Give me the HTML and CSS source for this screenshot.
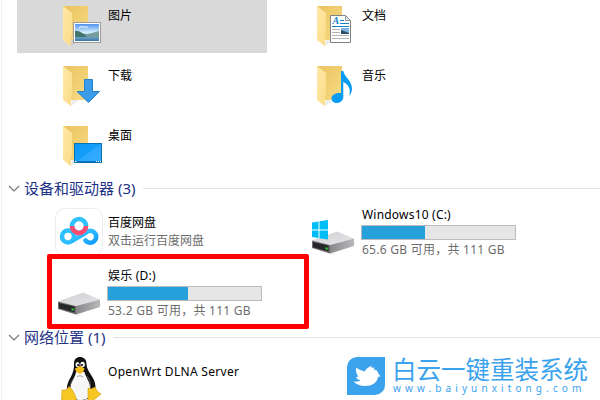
FILE: index.html
```html
<!DOCTYPE html>
<html lang="zh-CN">
<head>
<meta charset="utf-8">
<title>此电脑</title>
<link rel="stylesheet" href="styles.css">
</head>
<body>
<svg class="defs" width="0" height="0">
  <defs>
    <linearGradient id="back" x1="0" y1="0" x2="1" y2="1"><stop offset="0" stop-color="#e9c25e"/><stop offset="1" stop-color="#f8dc85"/></linearGradient>
    <linearGradient id="flap" x1="0" y1="0" x2="1" y2="1"><stop offset="0" stop-color="#ffe9a9"/><stop offset="1" stop-color="#fadc86"/></linearGradient>
    <linearGradient id="blue" x1="0" y1="0" x2="1" y2="1"><stop offset="0" stop-color="#0c98f7"/><stop offset=".5" stop-color="#159dfb"/><stop offset=".52" stop-color="#2ba8ff"/><stop offset="1" stop-color="#35acff"/></linearGradient>
    <linearGradient id="sky" x1="0" y1="0" x2="0" y2="1"><stop offset="0" stop-color="#5193ee"/><stop offset=".5" stop-color="#d8effb"/><stop offset=".65" stop-color="#8cb8d0"/><stop offset="1" stop-color="#3777a8"/></linearGradient>
    <linearGradient id="top" x1="0" y1="0" x2="1" y2="1"><stop offset="0" stop-color="#cfcfd2"/><stop offset="1" stop-color="#e6e6e9"/></linearGradient>
    <linearGradient id="side" x1="0" y1="0" x2="1" y2="0"><stop offset="0" stop-color="#88888b"/><stop offset="1" stop-color="#b9b9bc"/></linearGradient>
    <linearGradient id="pan" x1="0" y1="0" x2="1" y2="1"><stop offset="0" stop-color="#3bd2ff"/><stop offset="1" stop-color="#149bff"/></linearGradient>
    <symbol id="folder" viewBox="0 0 48 48">
      <path d="M10 40l7 .5-8 5.500z" fill="#000" opacity=".08"/>
      <path d="M1 6h25v34H9L1 38z" fill="url(#back)"/>
      <path d="M1 6l9 7v22l-1 .8V46.200L1 40z" fill="url(#flap)"/>
    </symbol>
    <symbol id="drive" viewBox="0 0 48 26">
      <path d="M4 18l20 6 22-10v-2L24 25z" fill="#000" opacity=".08"/>
      <path d="M3 10.500L28 1.500l17 7L21 15z" fill="url(#top)"/>
      <path d="M21 15l24-6.500v7.500L21 23.500z" fill="url(#side)"/>
      <path d="M3 10.500L21 15v8.500L3 18z" fill="#6d6d70"/>
      <path d="M4 12l15.500 3.500v6L4 17.200z" fill="#262729"/>
      <path d="M16.500 17.200l2.200.6v2l-2.200-.6z" fill="#35dc38"/>
    </symbol>
  </defs>
</svg>
<main class="explorer">
  <section class="grid folders">
    <div class="item selected">
      <svg class="icon" viewBox="0 0 48 48"><use href="#folder"/>
        <rect x="11.500" y="22.500" width="27" height="20" fill="#fff" stroke="#9c9c9c"/>
        <rect x="13" y="24" width="24" height="17" fill="url(#sky)"/>
        <path d="M13 31c4-1 7 3 12 4l12 2H13z" fill="#45746c"/><path d="M23 35l7-2 7-2v6H25z" fill="#769c9b"/>
        <path d="M17 28c3-3 6 0 9-1" stroke="#fff" stroke-width="1.200" fill="none" opacity=".7"/>
      </svg>
      <p class="name">图片</p>
    </div>
    <div class="item">
      <svg class="icon" viewBox="0 0 48 48"><use href="#folder"/>
        <path d="M14.500 15.500h15l5 5v22h-20z" fill="#fff" stroke="#7f8489"/>
        <path d="M29.500 15.500v5h5z" fill="#e6e6e6" stroke="#7f8489" stroke-width=".8"/>
        <text class="doc-letter" x="16.500" y="24">A</text>
        <path d="M24 20.500h4M24 23.500h9M16 26.500h17" stroke="#1c82c8"/>
        <path d="M16 29.500h8M16 32.500h8M16 35.500h17M16 38.500h17" stroke="#b1b5b8"/>
        <rect x="25" y="28" width="8" height="6" fill="#7eb2e2"/><path d="M25 30l8 3v1h-8z" fill="#2a4d61"/>
      </svg>
      <p class="name">文档</p>
    </div>
    <div class="item">
      <svg class="icon" viewBox="0 0 48 48"><use href="#folder"/>
        <path d="M22.500 19.500h8v12h7L26.500 42.500 15 31.500h7.500z" fill="#3b9dea" stroke="#2382cb"/>
      </svg>
      <p class="name">下载</p>
    </div>
    <div class="item">
      <svg class="icon" viewBox="0 0 48 48"><use href="#folder"/>
        <path d="M25 11h2.300c1 6 9 10 8.700 18-.1 3-1.500 5.500-2.700 7 1.300-6 .5-10.500-6-14v14.500c0 4-3 6.500-6.700 6.500-3 0-5.100-1.700-5.100-4.500 0-4 5.500-6.500 9.500-5.200z" fill="#099cf5"/>
      </svg>
      <p class="name">音乐</p>
    </div>
    <div class="item">
      <svg class="icon" viewBox="0 0 48 48"><use href="#folder"/>
        <rect x="12.500" y="23.500" width="27" height="19" fill="url(#blue)" stroke="#0870b5"/>
        <path d="M13 41.500h26" stroke="#0870b5"/><path d="M13 41.500h1.500M34 41.500h1M36 41.500h1M38 41.500h1" stroke="#fff"/>
      </svg>
      <p class="name">桌面</p>
    </div>
  </section>

  <h2 class="group"><svg class="chevron" viewBox="0 0 12 8"><path d="M1 1l5 5 5-5"/></svg><span>设备和驱动器 (3)</span></h2>
  <section class="grid devices">
    <div class="item">
      <svg class="icon app" viewBox="0 0 48 48">
        <rect x=".5" y=".5" width="47" height="47" rx="9" fill="#fff" stroke="#ededed"/>
        <g fill="none" stroke-width="4.600">
          <circle cx="13" cy="28.500" r="6" stroke="#2ebfff"/>
          <path d="M17.500 32.500L30.500 25a6 6 0 1 1 0 7.500" stroke="url(#pan)" stroke-linecap="round"/>
          <circle cx="24" cy="18" r="7" stroke="#2fc2ff"/>
          <path d="M17 18a7 7 0 0 0 14 0" stroke="#fa4b70"/>
        </g>
      </svg>
      <div class="label"><p>百度网盘</p><p class="sub">双击运行百度网盘</p></div>
    </div>
    <div class="item">
      <svg class="icon disk" viewBox="0 0 48 48"><use href="#drive" y="19" width="48" height="26"/>
        <path d="M3 11.500l6.500-1v8H3zM10.500 10.300L19 9v9.500h-8.500zM3 19.500h6.500v7.500L3 26zM10.500 19.500H19V28.500l-8.500-1.300z" fill="#00bdf5"/>
      </svg>
      <div class="volume"><p>Windows10 (C:)</p><div class="bar"><i style="width:41%"></i></div><p class="sub">65.6 GB 可用，共 111 GB</p></div>
    </div>
    <div class="item">
      <svg class="icon disk" viewBox="0 0 48 48"><use href="#drive" y="19" width="48" height="26"/></svg>
      <div class="volume"><p>娱乐 (D:)</p><div class="bar"><i style="width:52%"></i></div><p class="sub">53.2 GB 可用，共 111 GB</p></div>
    </div>
  </section>

  <h2 class="group"><svg class="chevron" viewBox="0 0 12 8"><path d="M1 1l5 5 5-5"/></svg><span>网络位置 (1)</span></h2>
  <section class="grid network">
    <div class="item">
      <svg class="icon" viewBox="0 0 48 48">
        <path d="M18 8c0-5 2.500-7 6-7s6.500 2 6.500 7c0 8 9 13 9 23 0 7-4 13-15.500 13S10 40 11 31c.8-8 7.500-12 7-23z" fill="#111"/>
        <path d="M20 16h8.500c1 5 6 10 6 18 0 8-4 10-11 10-6 0-9-5-9-12 0-6 4.500-10 5.500-16z" fill="#f7f7f7"/>
        <path d="M18 22c-3 3-4 7-4 11M31 20c3 4 4 8 3 13M21 21c2-2 5-1 6 0" stroke="#777" stroke-width=".7" fill="none"/>
        <ellipse cx="21.500" cy="8.500" rx="2" ry="2.500" fill="#fff"/><ellipse cx="26.600" cy="8.500" rx="2.200" ry="2.800" fill="#fff"/>
        <circle cx="22.100" cy="9" r="1"/><circle cx="26" cy="9" r="1.100"/>
        <path d="M19 12.500l5-2.500 4.500 2.500-1 3-3.500 2.500-4-2.500z" fill="#f5bd17"/>
        <path d="M6 34h4l3-3.500c3 2 6 8 7.500 12l-3 5-12-4zM32 32l3 1 4-2 2 4 4 3-6 5-7 4z" fill="#f6c623" stroke="#d29c13" stroke-width=".6"/>
      </svg>
      <p class="name">OpenWrt DLNA Server</p>
    </div>
  </section>
</main>
<div class="marker"></div>
<aside class="brand">
  <svg class="logo" viewBox="0 0 38 38">
    <path d="M10 0h28v28a10 10 0 0 1-10 10H0V10A10 10 0 0 1 10 0z" fill="#3ba2ee"/>
    <path d="M9 10.500c3 2.300 6 2.800 8.500 4 1.500-2.500 4-5 7.500-5.500l-.5 2 3-.5-1 2c3 0 4.500 1.800 5 4.500l2 2.200-2.500.8C30 26 25 29 18 29c-5 0-9-1.800-11.500-4.500 3 .4 5.500 0 7-1-2.500-.7-4-2-4.500-3.500l2.500-.3C9.500 17.500 8.500 14 9 10.500z" fill="#fff"/>
  </svg>
  <div><p class="brand-name">白云一键重装系统</p><p class="brand-url">www.baiyunxitong.com</p></div>
</aside>
</body>
</html>
```

FILE: styles.css
```css
* { box-sizing: border-box; }
body {
  margin: 0;
  width: 600px;
  height: 400px;
  overflow: hidden;
  position: relative;
  background: #fff;
  color: #000;
  font: 12px/16px "Noto Sans", "Noto Sans CJK SC", sans-serif;
}
p, h2 { margin: 0; white-space: nowrap; }
.defs { position: absolute; }
.explorer {
  height: 400px;
  margin-left: 1px;
  padding-left: 16px;
  border-left: 1px solid #f0f0f0;
  overflow: hidden;
}
.grid {
  display: grid;
  grid-template-columns: 250px 250px;
  column-gap: 4px;
  margin-left: -1px;
}
.folders { grid-auto-rows: 53px; row-gap: 7px; height: 177px; }
.devices { grid-auto-rows: 61px; height: 126px; }
.network { grid-auto-rows: 54px; padding-top: 7px; }
.item { display: flex; align-items: flex-start; padding-left: 45px; }
.selected { background: #d9d9d9; }
.icon { width: 48px; height: 48px; flex: none; display: block; overflow: visible; }
.name { padding-top: 8px; margin-left: -2px; }
.network .name { letter-spacing: .31px; }
.network .icon { margin-left: -6px; margin-right: 6px; }
.group {
  display: flex;
  align-items: center;
  height: 23px;
  margin-left: -9px;
  color: #1e3287;
  font-size: 15px;
  font-weight: 400;
  line-height: 23px;
}
.group::after { content: ""; flex: 1; height: 1px; background: #e2e2e2; margin-left: 8px; }
.chevron { width: 12px; height: 8px; margin: 0 4px 0 -1px; fill: none; stroke: #777; stroke-width: 1.2; }
.app { margin: 8px 5px 0 -7px; }
.label { padding-top: 15px; }
.label .sub { margin-top: 2px; }
.disk { margin: 11px 5px 0 -7px; }
.volume { padding-top: 7px; margin-left: -1px; }
.volume > p { margin-left: 1px; letter-spacing: .2px; }
.volume > .sub { letter-spacing: .26px; }
.sub { color: #6d6d6d; }
.bar {
  width: 155px;
  height: 15px;
  margin: 2px 0;
  border: 1px solid #bcbcbc;
  background: #e6e6e6;
}
.bar i { display: block; height: 100%; background: #26a0da; }
.marker {
  position: absolute;
  left: 47px;
  top: 254px;
  width: 262px;
  height: 75px;
  border: 5px solid #fe0000;
  border-radius: 2px;
}
.brand {
  position: absolute;
  left: 347px;
  top: 357px;
  display: flex;
  gap: 7px;
  color: #3ba2ee;
}
.logo { width: 38px; height: 38px; }
.brand-name { margin-top: -1px; font: 400 24.5px/25px "Noto Sans CJK SC", sans-serif; }
.brand-url { margin-left: 1px; font-size: 10px; line-height: 14px; letter-spacing: 4.1px; }
.doc-letter { font: italic bold 10px "Liberation Serif", serif; fill: #1c82c8; }
```
